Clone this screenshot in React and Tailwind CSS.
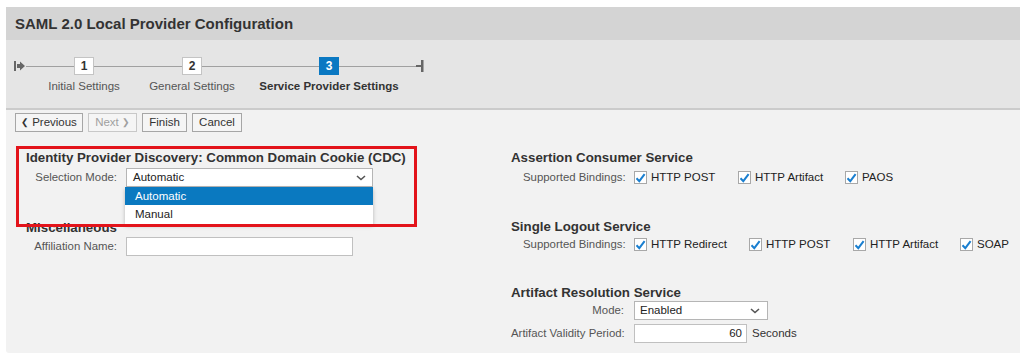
import React from 'react';

const font = { fontFamily: '"Liberation Sans", Arial, sans-serif' };

function Chevron({ className = '' }) {
    return (
        <svg width="10" height="6" viewBox="0 0 10 6" className={className}>
            <path d="M1 1l4 3.5L9 1" fill="none" stroke="#555" strokeWidth="1.6" />
        </svg>
    );
}

function Check({ label }) {
    return (
        <label className="flex items-center gap-[4px] text-[11.5px] text-[#222] whitespace-nowrap">
            <span className="w-[13px] h-[13px] bg-white border border-[#a8a8a8] flex items-center justify-center">
                <svg width="11" height="10" viewBox="0 0 11 10">
                    <path d="M1.5 5.2l2.8 3L9.6 1.2" fill="none" stroke="#1a7fd0" strokeWidth="2" />
                </svg>
            </span>
            {label}
        </label>
    );
}

function Btn({ children, disabled, className = '' }) {
    return (
        <button className={`h-[19px] flex items-center justify-center gap-[3px] text-[11.5px] leading-none border bg-[#f5f5f5] ${disabled ? 'text-[#a0a0a0] border-[#c8c8c8]' : 'text-[#333] border-[#a6a6a6]'} ${className}`}>
            {children}
        </button>
    );
}

function Step({ n, label, active, width }) {
    return (
        <div className="flex flex-col items-center" style={{ width }}>
            <div className="flex items-center w-full h-[18px]">
                <div className="flex-1 h-px bg-[#a0a0a0]" />
                <div className={`w-[20px] h-[18px] flex items-center justify-center text-[12px] font-bold ${active ? 'bg-[#0a78c2] text-white' : 'bg-white text-[#333] border border-[#c4c4c4]'}`}>{n}</div>
                <div className="flex-1 h-px bg-[#a0a0a0]" />
            </div>
            <div className={`mt-[3px] text-[11.5px] whitespace-nowrap ${active ? 'font-bold text-[#333]' : 'text-[#555]'}`}>{label}</div>
        </div>
    );
}

export default function App() {
    return (
        <div className="w-[1020px] h-[358px] bg-white pl-[6px] pt-[7px] overflow-hidden" style={font}>
            <div className="relative w-[1014px] h-[346px] flex flex-col rounded-bl-[3px] overflow-hidden">
                <div className="h-[33px] bg-[#d4d4d4] flex items-center pl-[9px] pt-[2px]">
                    <h1 className="text-[15px] font-bold text-[#333]">SAML 2.0 Local Provider Configuration</h1>
                </div>
                <div className="h-[70px] bg-[#e5e5e5] border-b-2 border-[#cbcbcb] flex items-start pt-[17px] pl-[8px]">
                    <div className="flex items-start">
                        <div className="h-[18px] flex items-center">
                            <svg width="12" height="10" viewBox="0 0 12 10">
                                <rect x="0" y="0" width="2" height="10" fill="#666" />
                                <path d="M3 3h3V0.5L11 5 6 9.5V7H3z" fill="#666" />
                            </svg>
                        </div>
                        <Step n="1" label="Initial Settings" width={116} />
                        <Step n="2" label="General Settings" width={100} />
                        <Step n="3" label="Service Provider Settings" active width={174} />
                        <div className="h-[18px] flex items-center">
                            <svg width="8" height="12" viewBox="0 0 8 12">
                                <rect x="0" y="5" width="5" height="2" fill="#666" />
                                <rect x="5" y="0" width="2.5" height="12" fill="#666" />
                            </svg>
                        </div>
                    </div>
                </div>
                <div className="flex-1 bg-[#f2f2f2]">
                    <div className="flex gap-[5px] pl-[9px] pt-[3px]">
                        <Btn className="w-[68px]"><span className="text-[9px]">&#10094;</span>Previous</Btn>
                        <Btn disabled className="w-[49px]">Next<span className="text-[9px]">&#10095;</span></Btn>
                        <Btn className="w-[45px]">Finish</Btn>
                        <Btn className="w-[50px]">Cancel</Btn>
                    </div>
                    <div className="flex pl-[20px] pt-[18px]">
                        {/* left column */}
                        <div className="w-[485px] flex flex-col">
                            <h2 className="h-[16px] leading-[16px] text-[13.3px] font-bold text-[#333] whitespace-nowrap">Identity Provider Discovery: Common Domain Cookie (CDC)</h2>
                            <div className="flex items-center mt-[2px] h-[19px]">
                                <span className="w-[92px] pr-[1px] text-right text-[11.4px] text-[#555] whitespace-nowrap">Selection Mode:</span>
                                <div className="relative ml-[8px]">
                                    <div className="w-[247px] h-[19px] bg-white border border-[#b5b5b5] flex items-center justify-between pl-[6px] pr-[6px] text-[11.5px] text-[#222]">
                                        Automatic
                                        <Chevron />
                                    </div>
                                    <div className="absolute left-[-1px] top-[19px] w-[248px] bg-white shadow-[0_2px_4px_rgba(0,0,0,0.25)] z-10 text-[11.5px]">
                                        <div className="h-[18px] leading-[18px] pl-[10px] bg-[#0a79c0] text-white">Automatic</div>
                                        <div className="h-[19px] leading-[19px] pl-[10px] text-[#222]">Manual</div>
                                    </div>
                                </div>
                            </div>
                            <h2 className="mt-[33px] h-[16px] leading-[16px] text-[13.3px] font-bold text-[#333]">Miscellaneous</h2>
                            <div className="flex items-center mt-[1px] h-[19px]">
                                <span className="w-[92px] pr-[1px] text-right text-[11.4px] text-[#555] whitespace-nowrap">Affiliation Name:</span>
                                <div className="ml-[8px] w-[227px] h-[19px] bg-white border border-[#c0c0c0]" />
                            </div>
                        </div>
                        {/* right column */}
                        <div className="flex flex-col">
                            <h2 className="h-[16px] leading-[16px] text-[13.3px] font-bold text-[#333]">Assertion Consumer Service</h2>
                            <div className="flex items-center mt-[2px] h-[19px]">
                                <span className="w-[123px] pl-[12px] text-[11.4px] text-[#555] whitespace-nowrap">Supported Bindings:</span>
                                <div className="w-[104px]"><Check label="HTTP POST" /></div>
                                <div className="w-[107px]"><Check label="HTTP Artifact" /></div>
                                <Check label="PAOS" />
                            </div>
                            <h2 className="mt-[32px] h-[16px] leading-[16px] text-[13.3px] font-bold text-[#333]">Single Logout Service</h2>
                            <div className="flex items-center mt-[0px] h-[19px]">
                                <span className="w-[123px] pl-[12px] text-[11.4px] text-[#555] whitespace-nowrap">Supported Bindings:</span>
                                <div className="w-[115px]"><Check label="HTTP Redirect" /></div>
                                <div className="w-[104px]"><Check label="HTTP POST" /></div>
                                <div className="w-[107px]"><Check label="HTTP Artifact" /></div>
                                <Check label="SOAP" />
                            </div>
                            <h2 className="mt-[31px] h-[16px] leading-[16px] text-[13.3px] font-bold text-[#333]">Artifact Resolution Service</h2>
                            <div className="flex items-center mt-[0px] h-[19px]">
                                <span className="w-[113px] text-right text-[11.4px] text-[#555]">Mode:</span>
                                <div className="ml-[10px] w-[134px] h-[19px] bg-white border border-[#b5b5b5] flex items-center justify-between pl-[5px] pr-[7px] text-[11.5px] text-[#222]">
                                    Enabled
                                    <Chevron />
                                </div>
                            </div>
                            <div className="flex items-center mt-[4px] h-[19px]">
                                <span className="w-[113px] text-right text-[11.4px] text-[#555] whitespace-nowrap">Artifact Validity Period:</span>
                                <div className="ml-[10px] w-[113px] h-[19px] bg-white border border-[#c0c0c0] flex items-center justify-end pr-[4px] text-[11.5px] text-[#222]">60</div>
                                <span className="ml-[5px] text-[11.5px] text-[#333]">Seconds</span>
                            </div>
                        </div>
                    </div>
                </div>
                {/* red annotation frame */}
                <div className="absolute left-[10px] top-[139px] w-[401px] h-[81px] border-[3px] border-[#e3141b] z-20 pointer-events-none" />
            </div>
        </div>
    );
}
